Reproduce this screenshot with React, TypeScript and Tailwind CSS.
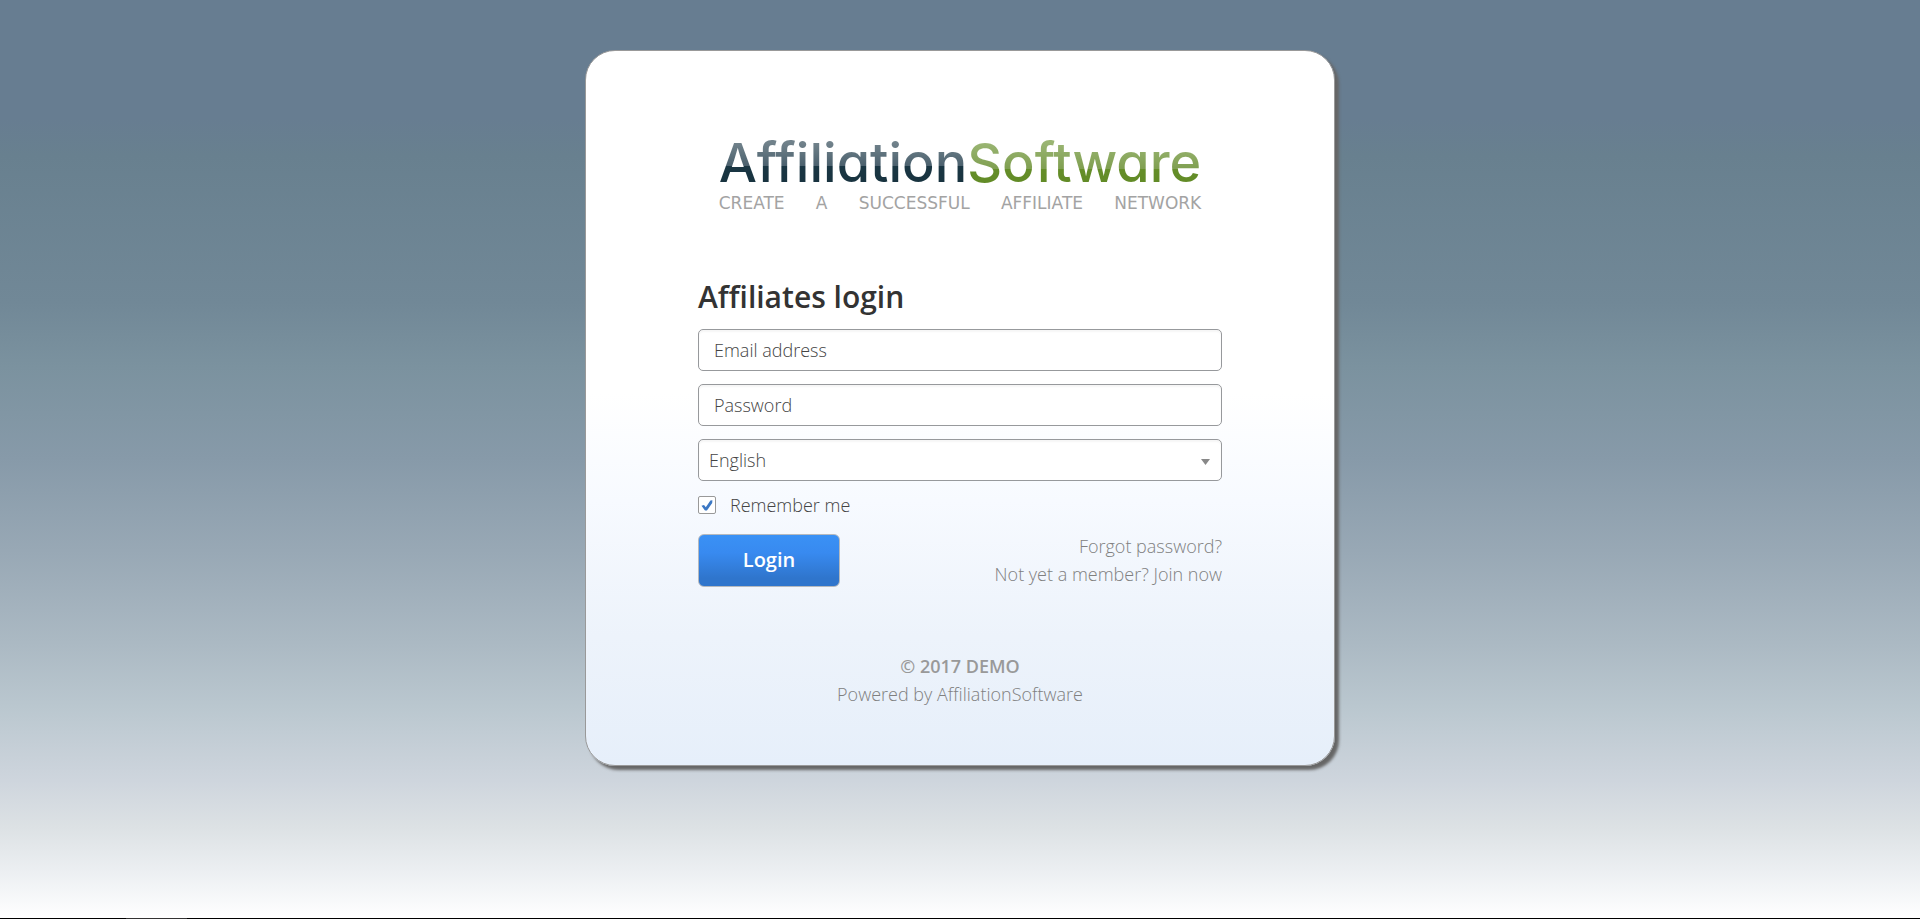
import { useState } from "react";

const fieldClass =
  "block h-[42px] w-full rounded-[5px] border border-[#97999c] bg-white font-light text-[#444] shadow-[inset_0_2px_2px_rgba(0,0,0,0.04)] outline-none placeholder:text-[#444] placeholder:opacity-100";

const languages = ["English", "Italiano", "Español", "Français", "Deutsch"];

const tagline = "CREATE A SUCCESSFUL AFFILIATE NETWORK";

function Logo() {
  return (
    <a href="#home" className="mx-auto block w-fit whitespace-nowrap">
      <span className="block font-['Inter'] text-[54px] leading-[62px] font-medium [font-feature-settings:'cv11']">
        <span className="bg-[linear-gradient(180deg,#71828b_20%,#4a606d_56%,#1a3643_56%,#17313d_100%)] bg-clip-text text-transparent">
          Affiliation
        </span>
        <span className="bg-[linear-gradient(180deg,#9ab573_20%,#7f9f50_60%,#658e29_60%,#5f8824_100%)] bg-clip-text text-transparent">
          Software
        </span>
      </span>
      <span className="flex justify-between font-['DejaVu_Sans'] text-[17px] leading-[18px] text-[#a3a3a3]">
        {tagline.split(" ").map((word) => (
          <span key={word}>{word}</span>
        ))}
      </span>
    </a>
  );
}

function LoginForm() {
  const [language, setLanguage] = useState("English");
  const [remember, setRemember] = useState(true);

  return (
    <form onSubmit={(e) => e.preventDefault()}>
      <h1 className="mb-[14px] text-[30px] leading-9 font-semibold text-[#333]">Affiliates login</h1>

      <div className="flex flex-col gap-[13px]">
        <input type="email" aria-label="Email address" placeholder="Email address" className={`${fieldClass} px-[15px]`} />
        <input type="password" aria-label="Password" placeholder="Password" className={`${fieldClass} px-[15px]`} />
        <div className="relative">
          <select
            aria-label="Language"
            value={language}
            onChange={(e) => setLanguage(e.target.value)}
            className={`${fieldClass} appearance-none pr-8 pl-[10px]`}
          >
            {languages.map((name) => (
              <option key={name}>{name}</option>
            ))}
          </select>
          <svg viewBox="0 0 9 6" className="pointer-events-none absolute top-5 right-3 h-[6px] w-[9px]">
            <path d="M0 0h9L4.5 6z" fill="#888" />
          </svg>
        </div>
      </div>

      <div className="mt-3 flex items-center gap-[14px]">
        <span className="relative h-[18px] w-[18px]">
          <input
            id="remember"
            type="checkbox"
            checked={remember}
            onChange={(e) => setRemember(e.target.checked)}
            className="peer block h-[18px] w-[18px] appearance-none rounded-[2px] border border-[#999] bg-white"
          />
          <svg viewBox="0 0 18 18" className="pointer-events-none absolute inset-0 hidden peer-checked:block">
            <path d="M3.5 9.8L6 9l1.8 2.2L12.4 4.6l2-.4-.2 2.8L8.9 14.6H7z" fill="#3c78c4" />
          </svg>
        </span>
        <label htmlFor="remember" className="leading-6 font-light text-[#444]">Remember me</label>
      </div>

      <div className="mt-[15px] flex items-center justify-between">
        <button
          type="submit"
          className="h-[53px] w-[142px] rounded-md border border-[#b5b9be] bg-[linear-gradient(180deg,#3a91f5_0%,#388af0_35%,#2f75cc_85%,#2f75cc_100%)] text-[20px] font-semibold text-white"
        >
          Login
        </button>
        <div className="flex flex-col text-right leading-7 font-light text-[#808080]">
          <a href="#forgot">Forgot password?</a>
          <a href="#join">Not yet a member? Join now</a>
        </div>
      </div>
    </form>
  );
}

export default function App() {
  return (
    <div className="flex min-h-screen flex-col font-['Open_Sans',sans-serif] text-[18px]">
      <main className="flex-1 bg-[linear-gradient(180deg,#677d91_0%,#677d91_13%,#68808f_17%,#718897_33%,#7b929f_40%,#879aa9_50%,#98a8b5_60%,#abb9c3_70%,#bac7cf_77%,#ced5dd_85%,#dce1e4_90%,#eceff2_95%,#ffffff_100%)] px-4 py-[50px]">
        <div className="mx-auto max-w-[750px] rounded-[30px] border border-[#999] bg-[linear-gradient(180deg,#ffffff_0%,#ffffff_48%,#f7faff_63%,#edf3fb_82%,#e6effa_100%)] px-28 pt-[81px] pb-[57px] shadow-[4px_4px_3px_#666]">
          <Logo />
          <div className="mt-[67px]">
            <LoginForm />
          </div>
          <footer className="mt-16 text-center leading-7 font-light text-[#808080]">
            <p className="font-semibold text-[#999]">© 2017 DEMO</p>
            <p>
              Powered by <a href="#software">AffiliationSoftware</a>
            </p>
          </footer>
        </div>
      </main>
      <div className="h-px bg-black pl-[126px]">
        <div className="h-px w-[61px] bg-[#333]" />
      </div>
    </div>
  );
}
